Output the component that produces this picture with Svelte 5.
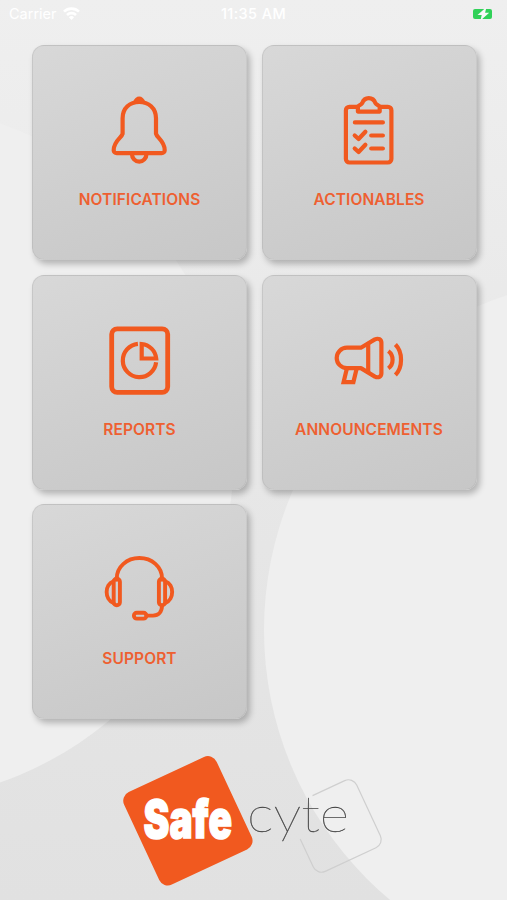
<script>
  const tiles = [
    { id: 'notifications', label: 'NOTIFICATIONS' },
    { id: 'actionables', label: 'ACTIONABLES' },
    { id: 'reports', label: 'REPORTS' },
    { id: 'announcements', label: 'ANNOUNCEMENTS' },
    { id: 'support', label: 'SUPPORT' }
  ];
</script>

<div class="screen">
  <svg class="backdrop" viewBox="0 0 507 900" aria-hidden="true">
    <circle cx="-115" cy="453" r="349" />
    <circle cx="616" cy="630" r="352" />
  </svg>

  <header class="status-bar">
    <div class="carrier">
      <span>Carrier</span>
      <svg width="17" height="13" viewBox="0 0 17 13" fill="none" stroke="#fff" stroke-width="2.6">
        <path d="M1 4.7a10.6 10.6 0 0 1 15 0" />
        <path d="M4 8a6.4 6.4 0 0 1 9 0" />
        <path d="M8.5 13 5.9 10.3a3.7 3.7 0 0 1 5.2 0z" fill="#fff" stroke="none" />
      </svg>
    </div>
    <span class="time">11:35 AM</span>
    <div class="battery">
      <svg width="24" height="14" viewBox="0 0 24 14">
        <rect x="1" y="2" width="19" height="10" rx="2" fill="#30d158" />
        <path d="M14.5 0 5.5 8h4.2l-1.2 5.5 8.7-7.8h-4.1z" fill="#f8f8f8" />
      </svg>
    </div>
  </header>

  <main class="grid">
    {#each tiles as tile (tile.id)}
      <button class="tile">
        <svg class="icon" viewBox="-35.4 0.2 72 72" aria-hidden="true">
          {#if tile.id === 'notifications'}
            <path d="M-16.8 40V24.5C-16.8 14-9.5 8.2-.2 8.2S16.6 14 16.6 24.5V40C17.5 44 25.3 47 25.3 56.4a3 3 0 0 1-3 3h-45a3 3 0 0 1-3-3C-25.7 47-17.7 44-16.8 40z" />
            <path class="solid" d="M-6.5 8.5C-4 .8 3.6.8 6.1 8.5z" />
            <path d="M-7.5 60a7.3 7.8 0 0 0 14.6 0" />
          {:else if tile.id === 'actionables'}
            <path d="M-11 13h-8a3.5 3.5 0 0 0-3.5 3.5v48.7a3.5 3.5 0 0 0 3.5 3.5h38.5a3.5 3.5 0 0 0 3.5-3.5V16.5a3.5 3.5 0 0 0-3.5-3.5h-8" />
            <path d="M-10.5 17.8v-4.5c0-2 3.2-1.8 4.3-4C-5 6-3 4.3.4 4.300S5.800 6 7 9.300c1.100 2.200 4.300 2 4.300 4v4.500z" />
            <path d="M-13.500 28.600h28M2.800 41.700h11.700M2.800 54.700h11.700" />
            <path d="m-13.700 41.700 3.900 3.500 6.800-7.300M-13.700 54.700l3.900 3.500 6.800-7.300" />
          {:else if tile.id === 'reports'}
            <rect x="-27.700" y="5" width="56" height="63.500" rx="5.500" stroke-width="4.800" />
            <path class="butt" d="M-1.500 20A16.700 16.700 0 1 0 16.700 38.500" />
            <path class="mitre" d="M2.300 20.200v14.500h14.500A16 16 0 0 0 2.300 20.200z" />
          {:else if tile.id === 'announcements'}
            <path d="M-7.500 23.900h-14a10.200 10.200 0 0 0 0 20.400h14L6.500 52.800c3.500 1.600 6.500 0 6.500-3.400V19c0-3.400-3-5-6.500-3.400z" />
            <path d="M-.2 20v28" />
            <path class="mitre" d="M-21.700 45.500-24.800 58.300h9.800l3.100-12.800" />
            <path class="butt" d="M19.900 27.300c5.700 4 5.700 13.300 0 17.300M27 20.700c7.500 7.500 7.500 22.900 0 30.400" />
          {:else}
            <g stroke-width="3.900">
              <path d="M-22.600 27V25.500C-22.600 14-12.500 5.200 0 5.200s22.600 8.800 22.600 20.300V27" />
              <rect x="-25.700" y="26" width="6.200" height="26.500" rx="3" />
              <rect x="19.500" y="26" width="6.200" height="26.500" rx="3" />
              <path d="M-26 28.500c-9 3-9 18.500 0 21.500M26 28.500c9 3 9 18.500 0 21.500" />
              <path d="M22.600 53c0 6-3.500 9.800-9 9.800H7" />
              <rect x="-5.500" y="60" width="12.500" height="5.800" rx="2.900" />
            </g>
          {/if}
        </svg>
        <span class="label">{tile.label}</span>
      </button>
    {/each}
  </main>

  <footer>
    <svg class="logo" viewBox="110 745 290 150" role="img" aria-label="Safe cyte">
      <rect x="-51" y="-51" width="102" height="102" rx="9.5" fill="#f1591f" transform="translate(187.900 820.800) rotate(-25)" />
      <path
        d="M-7.500-37H28a9 9 0 0 1 9 9V28a9 9 0 0 1-9 9H-28a9 9 0 0 1-9-9V-3"
        fill="none"
        stroke="#cfcfcf"
        stroke-width="1.200"
        transform="translate(335 826) rotate(-25)"
      />
      <text class="safe" transform="translate(143.5 837.5) scale(1 1.43)" textLength="88.5" lengthAdjust="spacingAndGlyphs">Safe</text>
      <text class="cyte" transform="translate(247 832)" textLength="102" lengthAdjust="spacingAndGlyphs">cyte</text>
    </svg>
  </footer>
</div>

<style>
  :global(body) {
    margin: 0;
  }

  .screen {
    position: relative;
    width: 507px;
    height: 900px;
    overflow: hidden;
    display: flex;
    flex-direction: column;
    background: linear-gradient(180deg, #efefef 0%, #e8e8e8 45%, #e1e1e1 100%);
    font-family: Inter, 'Liberation Sans', sans-serif;
  }

  /* large pale circles behind everything */
  .backdrop {
    position: absolute;
    inset: 0;
    width: 100%;
    height: 100%;
    fill: #efefef;
  }

  .status-bar {
    position: relative;
    display: grid;
    grid-template-columns: 1fr auto 1fr;
    align-items: center;
    height: 27px;
    padding: 0 11px 0 9px;
    color: #fff;
    font-size: 14.5px;
  }

  .carrier {
    display: flex;
    align-items: center;
    gap: 6px;
  }

  .time {
    padding-left: 2px;
    font-weight: 500;
    letter-spacing: 0.4px;
  }

  .battery {
    display: flex;
    justify-content: flex-end;
  }

  .grid {
    position: relative;
    display: grid;
    grid-template-columns: repeat(2, 215px);
    grid-auto-rows: 215px;
    gap: 14.5px;
    padding: 18px 0 0 32px;
  }

  .tile {
    display: flex;
    flex-direction: column;
    align-items: center;
    box-sizing: border-box;
    margin: 0;
    padding: 48px 0 0;
    border: 1px solid rgba(165, 165, 165, 0.25);
    border-radius: 12px;
    background: linear-gradient(160deg, #d8d8d8 0%, #c7c7c7 100%);
    box-shadow: 3px 4px 6px rgba(0, 0, 0, 0.25);
    font-family: inherit;
    cursor: pointer;
  }

  .icon {
    width: 72px;
    height: 72px;
    fill: none;
    stroke: #f1591f;
    stroke-width: 4.2;
    stroke-linecap: round;
    stroke-linejoin: round;
  }

  .icon .solid {
    fill: #f1591f;
    stroke: none;
  }

  .icon .butt {
    stroke-linecap: butt;
  }

  .icon .mitre {
    stroke-linejoin: miter;
  }

  .label {
    margin-top: 24px;
    color: #ee6031;
    font-size: 15.5px;
    font-weight: 600;
    line-height: 20px;
    letter-spacing: 0.1px;
  }

  footer {
    position: relative;
    display: flex;
    margin: 26px 0 0 110px;
  }

  .logo {
    width: 290px;
    height: 150px;
  }

  .safe {
    fill: #fff;
    stroke: #fff;
    stroke-width: 1;
    font-family: Inter, sans-serif;
    font-size: 37px;
    font-weight: 900;
  }

  .cyte {
    fill: #444;
    stroke: #444;
    stroke-width: 0.3;
    font-family: Lato, sans-serif;
    font-size: 49px;
    font-weight: 100;
  }
</style>
